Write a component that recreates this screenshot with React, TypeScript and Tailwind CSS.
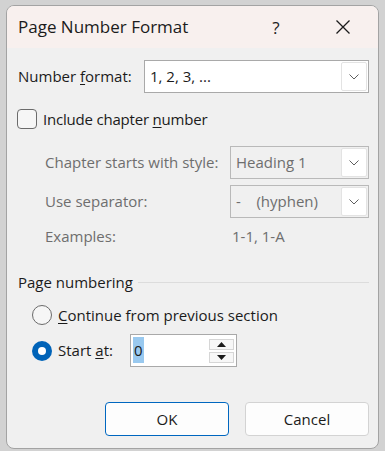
import React from "react";

const font = { fontFamily: '"Open Sans", "Noto Sans", sans-serif' };

function Chevron({ color = "#5f5f5f" }: { color?: string }) {
  return (
    <svg width="10" height="6" viewBox="0 0 10 6">
      <path d="M0.5 0.5 L5 5 L9.5 0.5" fill="none" stroke={color} strokeWidth="1" />
    </svg>
  );
}

function Combo({
  value,
  width,
  disabled,
}: {
  value: string;
  width: string;
  disabled?: boolean;
}) {
  return (
    <div
      className={`flex items-center h-[33px] border ${width} ${
        disabled ? "bg-[#f0f0f0] border-[#b9b9b9] text-[#6e6e6e]" : "bg-white border-[#a9a9a9] text-[#1b1b1b]"
      }`}
    >
      <div className="flex-1 pl-[5px] whitespace-pre">{value}</div>
      <div className="mr-[1px] w-[26px] h-[29px] bg-white border border-[#e3e3e3] rounded-[2px] flex items-center justify-center">
        <Chevron />
      </div>
    </div>
  );
}

export default function App() {
  return (
    <div className="w-[385px] h-[451px] bg-[#d2d2d2] pt-[5px] pl-[6px]" style={font}>
      <div className="w-[373px] h-[444px] border border-[#a3a3a3] rounded-[8px] overflow-hidden bg-[#f0f0f0] flex flex-col text-[15px] text-[#1b1b1b]">
        <div className="h-[42px] bg-[#f8f0ee] flex items-center pl-[11px] text-[17px] text-[#1b1b1b] shrink-0">
          <div className="flex-1 leading-none pb-[1px]">Page Number Format</div>
          <div className="w-[20px] text-center text-[17px] mr-[50px] leading-none">?</div>
          <svg width="14" height="14" viewBox="0 0 14 14" className="mr-[28px]">
            <path d="M0.5 0.5 L13.5 13.5 M13.5 0.5 L0.5 13.5" stroke="#1b1b1b" strokeWidth="1.3" />
          </svg>
        </div>
        <div className="flex flex-col px-[11px] pr-[9px]">
          <div className="flex items-center mt-[12px]">
            <div className="w-[126px]">
              Number <u className="underline-offset-2">f</u>ormat:
            </div>
            <Combo value="1, 2, 3, ..." width="w-[225px]" />
          </div>

          <div className="flex items-center mt-[15px] h-[22px] -ml-[1px]">
            <div className="w-[20px] h-[20px] border border-[#6b6b6b] rounded-[4px] bg-[#f6f6f6]" />
            <div className="ml-[6px] tracking-[-0.2px]">
              Include chapter <u className="underline-offset-2">n</u>umber
            </div>
          </div>

          <div className="flex items-center mt-[16px] pl-[27px] text-[#6e6e6e]">
            <div className="w-[185px]">Chapter starts with style:</div>
            <Combo value="Heading 1" width="w-[139px]" disabled />
          </div>

          <div className="flex items-center mt-[6px] pl-[27px] text-[#6e6e6e]">
            <div className="w-[185px]">Use separator:</div>
            <Combo value={"-    (hyphen)"} width="w-[139px]" disabled />
          </div>

          <div className="flex items-center mt-[7px] h-[22px] pl-[27px] text-[#6e6e6e]">
            <div className="w-[187px]">Examples:</div>
            <div>1-1, 1-A</div>
          </div>

          <div className="flex items-center mt-[24px] h-[22px]">
            <div>Page numbering</div>
            <div className="flex-1 h-px bg-[#dcdcdc] ml-[5px]" />
          </div>

          <div className="flex items-center mt-[11px] h-[22px] pl-[14px]">
            <div className="w-[20px] h-[20px] rounded-full border border-[#6b6b6b] bg-[#f6f6f6]" />
            <div className="ml-[6px]">
              <u className="underline-offset-2">C</u>ontinue from previous section
            </div>
          </div>

          <div className="flex items-center mt-[8px] pl-[14px]">
            <div className="w-[20px] h-[20px] rounded-full bg-[#0063b8] flex items-center justify-center">
              <div className="w-[8px] h-[8px] rounded-full bg-white" />
            </div>
            <div className="ml-[6px] w-[72px]">
              Start <u className="underline-offset-2">a</u>t:
            </div>
            <div className="w-[107px] h-[33px] border border-[#a9a9a9] bg-white flex items-center">
              <div className="flex-1 pl-[2px]">
                <span className="bg-[#99c9ef] px-[1px] py-[3px]">0</span>
              </div>
              <div className="flex flex-col gap-[2px] mr-[2px]">
                <div className="w-[25px] h-[11px] border border-[#d6d6d6] bg-[#f7f7f7] flex items-center justify-center">
                  <svg width="9" height="5" viewBox="0 0 9 5">
                    <path d="M0 5 L4.5 0 L9 5 Z" fill="#1b1b1b" />
                  </svg>
                </div>
                <div className="w-[25px] h-[11px] border border-[#d6d6d6] bg-[#f7f7f7] flex items-center justify-center">
                  <svg width="9" height="5" viewBox="0 0 9 5">
                    <path d="M0 0 L9 0 L4.5 5 Z" fill="#1b1b1b" />
                  </svg>
                </div>
              </div>
            </div>
          </div>

          <div className="flex justify-end gap-[16px] mt-[35px]">
            <div className="w-[124px] h-[34px] border border-[#0067c0] rounded-[4px] bg-[#fdfdfd] flex items-center justify-center">
              OK
            </div>
            <div className="w-[124px] h-[34px] border border-[#d3d3d3] rounded-[4px] bg-[#fdfdfd] flex items-center justify-center">
              Cancel
            </div>
          </div>
        </div>
      </div>
    </div>
  );
}
